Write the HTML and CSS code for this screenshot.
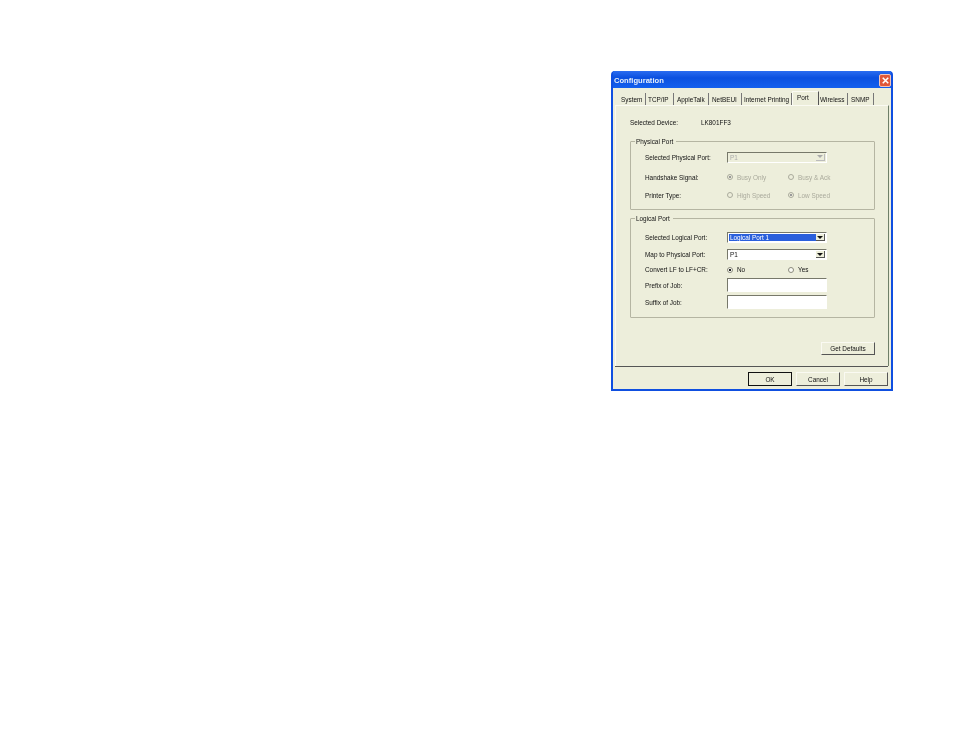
FILE: index.html
```html
<!DOCTYPE html>
<html lang="en">
<head>
<meta charset="utf-8">
<title>Configuration</title>
<link rel="stylesheet" href="styles.css">
</head>
<body>
<main class="window">
  <header class="titlebar">
    <span class="title">Configuration</span>
    <span class="close"><svg viewBox="0 0 12 12" width="11" height="11"><path d="M3 3l6 6M9 3l-6 6" stroke="#fff" stroke-width="1.7" fill="none"/></svg></span>
  </header>
  <div class="client">
    <nav class="tabs">
      <span class="tab t1">System</span>
      <span class="tab t2">TCP/IP</span>
      <span class="tab t3">AppleTalk</span>
      <span class="tab t4">NetBEUI</span>
      <span class="tab t5">Internet Printing</span>
      <span class="tab active">Port</span>
      <span class="tab t7">Wireless</span>
      <span class="tab t8">SNMP</span>
    </nav>
    <section class="panel">
      <div class="device"><span class="device-label">Selected Device:</span><span>LK801FF3</span></div>

      <fieldset class="group physical">
        <legend>Physical Port</legend>
        <div class="row r1"><label>Selected Physical Port:</label><span class="select disabled"><span class="value">P1</span><span class="arrow"><i></i></span></span></div>
        <div class="row r2"><label>Handshake Signal:</label><span class="radio disabled on"><i></i>Busy Only</span><span class="radio disabled"><i></i>Busy &amp; Ack</span></div>
        <div class="row r3"><label>Printer Type:</label><span class="radio disabled"><i></i>High Speed</span><span class="radio disabled on"><i></i>Low Speed</span></div>
      </fieldset>

      <fieldset class="group logical">
        <legend>Logical Port</legend>
        <div class="row l1"><label>Selected Logical Port:</label><span class="select"><span class="value selected">Logical Port 1</span><span class="arrow"><i></i></span></span></div>
        <div class="row l2"><label>Map to Physical Port:</label><span class="select"><span class="value">P1</span><span class="arrow"><i></i></span></span></div>
        <div class="row l3"><label>Convert LF to LF+CR:</label><span class="radio on"><i></i>No</span><span class="radio"><i></i>Yes</span></div>
        <div class="row l4"><label>Prefix of Job:</label><span class="input"></span></div>
        <div class="row l5"><label>Suffix of Job:</label><span class="input"></span></div>
      </fieldset>

      <div class="defaults"><button class="btn wide">Get Defaults</button></div>
    </section>
    <footer class="actions">
      <button class="btn ok">OK</button>
      <button class="btn">Cancel</button>
      <button class="btn">Help</button>
    </footer>
  </div>
</main>
</body>
</html>
```
FILE: styles.css
```css
* { box-sizing: border-box; }
html, body { margin: 0; background: #fff; }
body {
  width: 954px;
  height: 738px;
  padding: 71px 0 0 611px;
  overflow: hidden;
  font: 6.4px/9px "Liberation Sans", Arial, sans-serif;
  color: #111;
}
.window {
  width: 282px;
  height: 320px;
  display: flex;
  flex-direction: column;
  background: #0f4fe0;
  border-radius: 4px 4px 0 0;
  padding: 0 2px 2px;
  filter: blur(0.4px);
}
.titlebar {
  height: 17px;
  flex: none;
  display: flex;
  align-items: center;
  justify-content: space-between;
  padding: 1px 0 0 1px;
  background: linear-gradient(#2a6cf0, #0b50e0 40%, #1360ee);
}
.title { color: #e4eefc; font-size: 7.6px; font-weight: bold; }
.close {
  width: 12px;
  height: 13px;
  display: flex;
  background: #e0583a;
  border: 1px solid #f3c4b8;
  border-radius: 2px;
  align-items: center;
  justify-content: center;
}
.close svg { flex: none; }
.client {
  flex: 1;
  min-height: 0;
  display: flex;
  flex-direction: column;
  background: #edeedb;
  padding: 4px 2px 0;
}
.tabs {
  height: 13px;
  flex: none;
  display: flex;
  align-items: flex-end;
  padding-left: 3px;
  white-space: nowrap;
}
.tab {
  height: 12px;
  padding: 2px 0 0 2px;
  border-right: 1px solid #777;
  line-height: 10px;
}
.t1 { width: 28px; padding-left: 3px; }
.t2 { width: 28px; }
.t3 { width: 35px; padding-left: 3px; }
.t4 { width: 33px; padding-left: 3px; }
.t5 { width: 50px; }
.t7 { width: 29px; padding-left: 1px; }
.t8 { width: 26px; padding-left: 3px; }
.active {
  width: 27px;
  height: 14px;
  padding: 1px 0 0 4px;
  background: #edeedb;
  border-top: 1px solid #fbfbf3;
  border-left: 1px solid #fbfbf3;
  border-right: 1px solid #555;
}
.panel {
  height: 261px;
  flex: none;
  width: 274px;
  border-right: 1px solid #6f7f68;
  border-left: 1px solid #fafaf2;
  border-top: 1px solid #fafaf2;
  padding: 12px 13px 0 14px;
  display: flex;
  flex-direction: column;
}
.device { display: flex; height: 9px; }
.device-label { width: 71px; }
.group {
  margin: 0;
  min-width: 0;
  border: 1px solid #b5b5a2;
  border-radius: 1px;
  padding: 0 0 0 14px;
}
.group legend {
  padding: 0 3px 0 1px;
  margin-left: -10px;
  line-height: 9px;
}
.physical { height: 73px; margin-top: 10px; }
.logical { height: 104px; margin-top: 4px; }
.row { display: flex; align-items: center; height: 12px; }
.row label { width: 82px; flex: none; }
.r1 { margin-top: 5px; }
.r2 { margin-top: 8px; }
.r3 { margin-top: 6px; }
.l1 { margin-top: 9px; height: 11px; }
.l2 { margin-top: 6px; height: 11px; }
.l3 { margin-top: 4px; height: 11px; }
.l4 { margin-top: 3px; height: 14px; }
.l5 { margin-top: 3px; height: 14px; }
.select {
  width: 100px;
  height: 11px;
  display: flex;
  background: #fff;
  border: 1px solid;
  border-color: #77786a #fff #fff #77786a;
  padding: 1px;
}
.value { flex: 1; padding-left: 1px; line-height: 8px; }
.value.selected { background: #2a5fdc; color: #fff; }
.arrow {
  width: 9px;
  display: flex;
  align-items: center;
  justify-content: center;
  background: #edeedb;
  border-right: 1px solid #555;
  border-bottom: 1px solid #555;
}
.arrow i {
  width: 0;
  height: 0;
  border: 3px solid transparent;
  border-top-color: #111;
  border-bottom: 0;
}
.select.disabled { background: #edeedb; color: #aaa; }
.select.disabled .arrow { border-color: #bbb; }
.select.disabled .arrow i { border-top-color: #aaa; }
.radio { width: 61px; flex: none; display: flex; align-items: center; gap: 4px; }
.radio i {
  width: 6px;
  height: 6px;
  flex: none;
  border-radius: 50%;
  background: #fbfbf5;
  border: 1px solid #8a8a7c;
}
.radio.on i { background: radial-gradient(#222 45%, #fbfbf5 55%); }
.radio.disabled { color: #aaaa9c; }
.radio.disabled i { border-color: #aaaa9c; background: #edeedb; }
.radio.disabled.on i { background: radial-gradient(#999 45%, #edeedb 55%); }
.input {
  width: 100px;
  height: 14px;
  background: #fff;
  border: 1px solid;
  border-color: #77786a #fff #fff #77786a;
}
.defaults { display: flex; justify-content: flex-end; margin-top: 24px; }
.btn {
  font: inherit;
  color: #111;
  width: 44px;
  height: 14px;
  padding: 0;
  background: #edeedb;
  border: 1px solid;
  border-color: #fafaf2 #555 #555 #fafaf2;
}
.wide { width: 54px; height: 13px; }
.actions {
  flex: none;
  height: 23px;
  display: flex;
  justify-content: flex-end;
  gap: 4px;
  padding: 5px 0 0;
  margin-right: 1px;
  border-top: 1px solid #555;
}
.ok { border: 1px solid #111; }
```
